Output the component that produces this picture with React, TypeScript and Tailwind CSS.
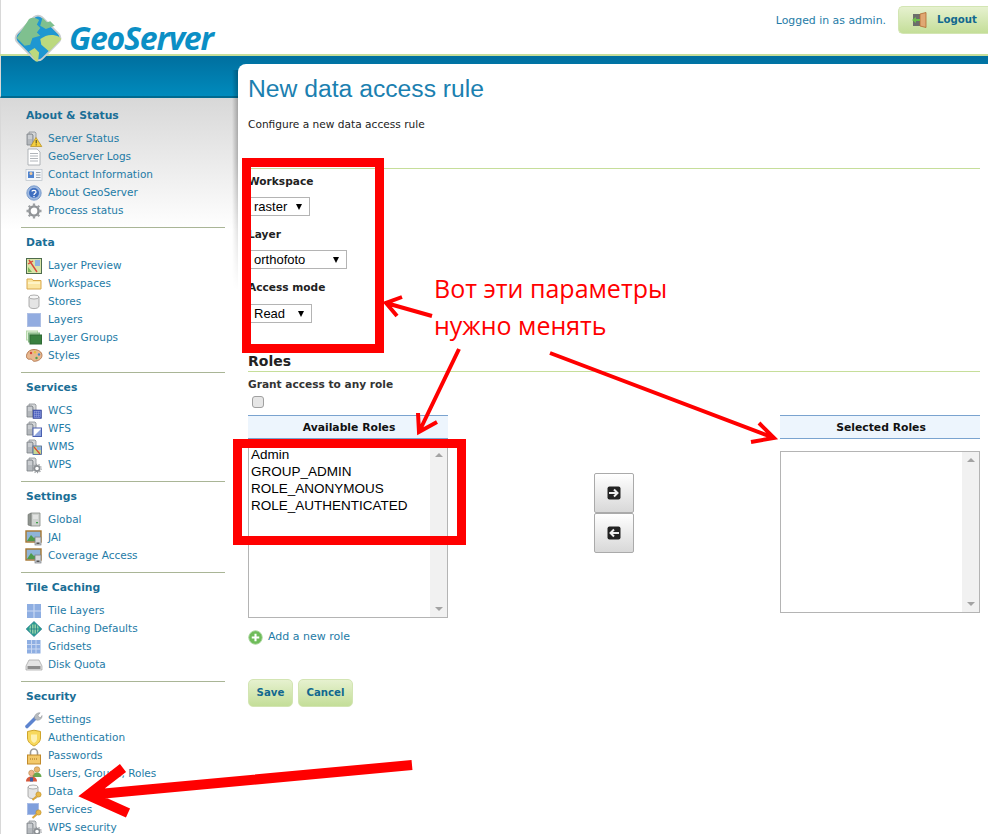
import type { ReactNode } from "react";

const Svg = ({ children }: { children: ReactNode }) => (
  <svg viewBox="0 0 16 16" className="h-4 w-4 shrink-0 overflow-visible">
    {children}
  </svg>
);

const Server = ({ x = 1 }: { x?: number }) => (
  <g>
    <path d={`M${x + 2} 1h6l1 1v10h-7z`} fill="#d4d6d8" stroke="#8b9096" strokeWidth=".8" />
    <path d={`M${x} 3h5l1 1v10h-6z`} fill="#b4b8bc" stroke="#7b8086" strokeWidth=".8" />
    <path d={`M${x + 1} 5h4M${x + 1} 7h4`} stroke="#eceef0" strokeWidth=".8" />
  </g>
);

const Key = () => (
  <g>
    <circle cx="12.5" cy="10.5" r="2.6" fill="#e8b84a" stroke="#b98a20" strokeWidth=".6" />
    <path d="M10.5 12.5 6.5 16" stroke="#d9a63a" strokeWidth="2" />
  </g>
);

const Can = () => (
  <g>
    <path d="M2 3v9c0 1.6 2.4 2.6 5 2.6s5-1 5-2.6V3z" fill="#e4e4e4" stroke="#9a9a9a" strokeWidth=".8" />
    <ellipse cx="7" cy="3" rx="5" ry="2" fill="#f6f6f6" stroke="#9a9a9a" strokeWidth=".8" />
  </g>
);

const Landscape = () => (
  <g>
    <rect x="0" y="1" width="15" height="11" fill="#8fb4d8" stroke="#a5752f" strokeWidth="1.4" />
    <path d="M1 11 5 5l3 3 2-1 3 4z" fill="#4f9a4a" />
    <rect x="9" y="7" width="6" height="8" fill="#c9cbce" stroke="#7d8186" strokeWidth=".7" />
    <path d="M10 9h4M10 11h4" stroke="#f0f0f0" strokeWidth=".7" />
    <rect x="10.5" y="12.5" width="3" height="1.5" fill="#555" />
  </g>
);

const icons: Record<string, ReactNode> = {
  status: (
    <Svg>
      <Server />
      <path d="M10 6.5 15.8 15.5H4.6z" fill="#f5cf3d" stroke="#b48a17" strokeWidth=".7" />
      <path d="M10.2 9v3.4M10.2 13.4v1" stroke="#3a3a20" strokeWidth="1" />
    </Svg>
  ),
  logs: (
    <Svg>
      <path d="M2 0h9l3 3v13H2z" fill="#fff" stroke="#9ea3a8" strokeWidth=".8" />
      <path d="M4 4.5h8M4 7h8M4 9.5h8M4 12h8" stroke="#a8adb2" strokeWidth=".9" />
    </Svg>
  ),
  contact: (
    <Svg>
      <rect x="0" y="2.5" width="16" height="11" fill="#f4f6f9" stroke="#b9c0c8" strokeWidth=".7" />
      <rect x="2" y="4.5" width="6" height="6.5" fill="#4e83cf" />
      <circle cx="5" cy="6.5" r="1.5" fill="#f0c89a" />
      <path d="M10 5.5h4.5M10 8h4.5M10 10.5h4.5" stroke="#8c97a4" strokeWidth=".9" />
    </Svg>
  ),
  about: (
    <Svg>
      <circle cx="8" cy="8" r="7.2" fill="#9db8e0" stroke="#6a8fc4" strokeWidth=".8" />
      <circle cx="8" cy="8" r="5" fill="#3f6fc0" />
      <path d="M6 6.5C6 5 10 5 10 7c0 1.4-2 1.3-2 3M8 11v1.2" fill="none" stroke="#fff" strokeWidth="1.2" />
    </Svg>
  ),
  gear: (
    <Svg>
      <path d="M8 5.2a2.8 2.8 0 1 0 0 5.6 2.8 2.8 0 0 0 0-5.6z" fill="#fff" />
      <circle cx="8" cy="8" r="4.6" fill="none" stroke="#8c8f92" strokeWidth="2.4" />
      <path d="M8 .5v3M8 12.5v3M.5 8h3M12.5 8h3M2.7 2.7l2.1 2.1M11.2 11.2l2.1 2.1M13.3 2.7l-2.1 2.1M4.8 11.2l-2.1 2.1" stroke="#9c9fa2" strokeWidth="2.3" />
    </Svg>
  ),
  preview: (
    <Svg>
      <rect x=".5" y=".5" width="15" height="15" fill="#d8e4a8" stroke="#4d6b4d" />
      <path d="M9 2h5v6H9z" fill="#8fb4e0" />
      <path d="M2 9l4 5h-4z" fill="#7cb65c" />
      <path d="M3 2l8 12M2 6l5-3" stroke="#d9483a" strokeWidth="1.4" />
    </Svg>
  ),
  folder: (
    <Svg>
      <path d="M1 3h5l1 1.5h8V13H1z" fill="#fbe6a2" stroke="#d9a84c" />
      <path d="M2 7h12" stroke="#fff6d0" strokeWidth="1.6" />
    </Svg>
  ),
  store: (
    <Svg>
      <g transform="translate(1 0)"><Can /></g>
    </Svg>
  ),
  layer: (
    <Svg>
      <rect x="1.5" y="1.5" width="13" height="13" fill="#92ace0" stroke="#aebfe4" />
    </Svg>
  ),
  groups: (
    <Svg>
      <rect x=".5" y="1" width="11" height="9" fill="#e0f0d8" stroke="#b5d8aa" />
      <rect x="2.5" y="3" width="11" height="9" fill="#9cc79a" stroke="#88b888" />
      <rect x="4" y="5" width="11.5" height="9" fill="#39803f" stroke="#2f6b35" />
    </Svg>
  ),
  styles: (
    <Svg>
      <path d="M8 1.500c4.600 0 8 2.600 8 5.800 0 3.600-3.800 6-7.800 6-1.600 0-1.600-1.600-2.800-2-1.600-.5-2.400.6-3.800-.6C-.8 9.400.4 1.500 8 1.500z" fill="#e8b890" stroke="#a8673a" strokeWidth=".8" />
      <circle cx="5" cy="5" r="1.200" fill="#d8433a" />
      <circle cx="9" cy="4.300" r="1.200" fill="#e8c23a" />
      <circle cx="13" cy="6.500" r="1.200" fill="#3f8ac8" />
      <circle cx="10.500" cy="10" r="1.200" fill="#4fa04a" />
    </Svg>
  ),
  wcs: (
    <Svg>
      <Server />
      <rect x="7" y="7" width="8.500" height="8.500" fill="#4f62c0" stroke="#39478f" strokeWidth=".6" />
      <path d="M8 9h7M8 11h7M8 13h7M9 8v7M11 8v7M13 8v7" stroke="#b5bfe8" strokeWidth=".7" strokeDasharray="1 1" />
    </Svg>
  ),
  wfs: (
    <Svg>
      <Server />
      <rect x="7" y="7" width="8.500" height="8.500" fill="#fff" stroke="#4a5fb0" />
      <path d="M15 8v7H8z" fill="#8ea4de" />
    </Svg>
  ),
  wms: (
    <Svg>
      <Server />
      <rect x="7" y="7" width="8.500" height="8.500" fill="#c9d890" stroke="#3f5fa0" strokeWidth=".8" />
      <path d="M8 8l6 7" stroke="#d9483a" strokeWidth="1.200" />
      <path d="M11 8h4v3h-4z" fill="#8fb4e0" />
    </Svg>
  ),
  wps: (
    <Svg>
      <Server />
      <circle cx="11" cy="11.500" r="2.600" fill="#fff" stroke="#8a8e92" strokeWidth="1.600" />
      <circle cx="11" cy="11.500" r="4.200" fill="none" stroke="#9a9ea2" strokeWidth="1.200" strokeDasharray="1.300 1.300" />
    </Svg>
  ),
  global: (
    <Svg>
      <path d="M5 1h9v13H5z" fill="#cfd2cf" stroke="#868a86" strokeWidth=".8" />
      <path d="M2 2.500 5 1v13l-3-1z" fill="#8f948f" stroke="#70746f" strokeWidth=".6" />
      <path d="M7 4h5M7 6h5" stroke="#f4f4f4" />
      <rect x="10" y="10" width="2" height="1.300" fill="#3fa04a" />
    </Svg>
  ),
  coverage: (
    <Svg>
      <Landscape />
    </Svg>
  ),
  tiles: (
    <Svg>
      <rect x="1" y="1" width="14" height="14" fill="#8eaee2" />
      <path d="M8 1v14M1 8h14" stroke="#c9d8f2" strokeWidth="1.200" />
    </Svg>
  ),
  caching: (
    <Svg>
      <path d="M8 .5 15.800 8 8 15.500.2 8z" fill="#27a08f" stroke="#1d6f8a" strokeWidth=".7" />
      <circle cx="8" cy="8" r="4.800" fill="#8fd0a8" />
      <path d="M3 8h10M8 3v10M5.500 4v8M10.500 4v8" stroke="#1d7f86" strokeWidth=".8" />
    </Svg>
  ),
  gridsets: (
    <Svg>
      <rect x="1" y="1" width="13.500" height="13.500" fill="#8eaee2" />
      <path d="M5.500 1v13.500M10 1v13.500M1 5.500h13.500M1 10h13.500" stroke="#c9d8f2" />
    </Svg>
  ),
  disk: (
    <Svg>
      <path d="M3 3h10l3 6v4H0V9z" fill="#e4e4e4" stroke="#a2a2a2" strokeWidth=".7" />
      <rect x="1.500" y="9" width="13" height="3" fill="#8c8c8c" />
    </Svg>
  ),
  wrench: (
    <Svg>
      <path d="M1 14.500 9.500 6" stroke="#5d84cf" strokeWidth="3.600" strokeLinecap="round" />
      <path d="M8.500 6.500C8 3 11 .5 14.200.8L12 3.200l.8 2 2.200.3L16 3.500c.5 3-2.800 5.500-5.500 4.500z" fill="#b8bcc0" stroke="#8a8e92" strokeWidth=".5" />
    </Svg>
  ),
  shield: (
    <Svg>
      <path d="M1.500 1.500 8 .2l6.500 1.300V8c0 4-3.500 6.500-6.500 8-3-1.500-6.500-4-6.500-8z" fill="#f7d85c" stroke="#cfa52c" />
      <path d="M5 4.500h6V9c0 2-1.500 3-3 4-1.500-1-3-2-3-4z" fill="#fdf0b0" />
    </Svg>
  ),
  lock: (
    <Svg>
      <path d="M4.500 7V4.500a3.500 3.500 0 0 1 7 0V7" fill="none" stroke="#9a9a9a" strokeWidth="1.600" />
      <rect x="1.500" y="7" width="13" height="9" fill="#f3c96a" stroke="#c08a2c" />
      <path d="M4 11h8" stroke="#a07020" strokeDasharray="1 1" />
    </Svg>
  ),
  users: (
    <Svg>
      <circle cx="11" cy="3.500" r="2.800" fill="#e9b56c" stroke="#a87c30" strokeWidth=".5" />
      <path d="M6.500 11c0-3 2-4.500 4.500-4.500s4.500 1.500 4.500 4.500z" fill="#6aa84f" />
      <circle cx="5.500" cy="7" r="2.800" fill="#eeb58a" stroke="#a87c30" strokeWidth=".5" />
      <path d="M0 15.500c0-3.500 2.500-5 5.500-5s5.500 1.500 5.500 5z" fill="#d4573c" />
      <path d="M4 11.500h3v4H4z" fill="#3a5fa8" />
    </Svg>
  ),
  secData: (
    <Svg>
      <Can />
      <Key />
    </Svg>
  ),
  secServices: (
    <Svg>
      <rect x="1.500" y="1.500" width="11" height="11" fill="#7f9fdc" stroke="#a8bce6" />
      <Key />
    </Svg>
  ),
  wpsSec: (
    <Svg>
      <Server />
      <circle cx="11" cy="11.500" r="2.600" fill="#fff" stroke="#8a8e92" strokeWidth="1.600" />
      <circle cx="11" cy="11.500" r="4.200" fill="none" stroke="#9a9ea2" strokeWidth="1.200" strokeDasharray="1.300 1.300" />
    </Svg>
  ),
};

const nav = [
  {
    title: "About & Status",
    items: [
      ["status", "Server Status"],
      ["logs", "GeoServer Logs"],
      ["contact", "Contact Information"],
      ["about", "About GeoServer"],
      ["gear", "Process status"],
    ],
  },
  {
    title: "Data",
    items: [
      ["preview", "Layer Preview"],
      ["folder", "Workspaces"],
      ["store", "Stores"],
      ["layer", "Layers"],
      ["groups", "Layer Groups"],
      ["styles", "Styles"],
    ],
  },
  {
    title: "Services",
    items: [
      ["wcs", "WCS"],
      ["wfs", "WFS"],
      ["wms", "WMS"],
      ["wps", "WPS"],
    ],
  },
  {
    title: "Settings",
    items: [
      ["global", "Global"],
      ["coverage", "JAI"],
      ["coverage", "Coverage Access"],
    ],
  },
  {
    title: "Tile Caching",
    items: [
      ["tiles", "Tile Layers"],
      ["caching", "Caching Defaults"],
      ["gridsets", "Gridsets"],
      ["disk", "Disk Quota"],
    ],
  },
  {
    title: "Security",
    items: [
      ["wrench", "Settings"],
      ["shield", "Authentication"],
      ["lock", "Passwords"],
      ["users", "Users, Groups, Roles"],
      ["secData", "Data"],
      ["secServices", "Services"],
      ["wpsSec", "WPS security"],
    ],
  },
];

const Logo = () => (
  <svg viewBox="0 0 50 50" className="h-[56px] w-[56px] shrink-0">
    <rect x="8.500" y="8.500" width="33" height="33" rx="6" transform="rotate(45 25 25)" fill="#c9ced0" />
    <rect x="10" y="10" width="30" height="30" rx="5" transform="rotate(45 25 25)" fill="#1f97d2" />
    <path d="M6 25 17 8c3-2 7-1 9 1l-2 4 3 3-3 4 3 3-7 2-2 6-5 1-4-4z" fill="#7fc08f" />
    <path d="M27 26c5-4 11-5 17-2l2 2-11 11-7-6z" fill="#bcd97e" />
    <path d="M29 7l4 4 3-1 4 4-8 3-5-3z" fill="#7fc08f" />
    <path d="M17 37l5-3 4 4-1 8-2 0z" fill="#bcd97e" />
  </svg>
);

const Field = ({ label, value, width, className, gap }: { label: string; value: string; width: string; className: string; gap: string }) => (
  <div className={`flex flex-col items-start ${className}`}>
    <label className="h-[16px] text-[10.6px] leading-[16px] font-bold text-[#222]">{label}</label>
    <div className={`flex h-[19px] items-center justify-between border border-[#b4b4b4] bg-white pr-[7px] pl-[5px] ${width} ${gap}`}>
      <span className="font-['Liberation_Sans'] text-[13px] text-black">{value}</span>
      <span className="h-0 w-0 border-x-[3.5px] border-t-[6px] border-x-transparent border-t-black" />
    </div>
  </div>
);

const ListBox = ({ roles, height }: { roles: string[]; height: string }) => (
  <div className={`flex w-[200px] border border-[#b4b4b4] bg-white ${height}`}>
    <div className="-mt-[1px] flex-1 pl-[2px] font-['Liberation_Sans'] text-[13.5px] leading-[17px] text-black">
      {roles.map((r) => (
        <div key={r}>{r}</div>
      ))}
    </div>
    <div className="flex w-[17px] flex-col items-center justify-between bg-[#f1f1f1] py-[6px]">
      <span className="h-0 w-0 border-x-[4px] border-b-[4px] border-x-transparent border-b-[#a3a3a3]" />
      <span className="h-0 w-0 border-x-[4px] border-t-[4px] border-x-transparent border-t-[#a3a3a3]" />
    </div>
  </div>
);

const RolesHead = ({ children }: { children: string }) => (
  <div className="h-[24px] w-[200px] border-y border-[#7aa3cf] bg-[#edf5fd] pl-[2px] text-center text-[10.8px] leading-[23px] font-bold text-[#111]">
    {children}
  </div>
);

const MoveBtn = ({ dir }: { dir: "r" | "l" }) => (
  <div className="flex h-[40px] w-[40px] items-center justify-center rounded-[2px] border border-[#aaa] bg-gradient-to-b from-white to-[#d8d8d8]">
    <svg viewBox="0 0 14 14" className="h-[14px] w-[14px]">
      <rect x="0.500" y="0.500" width="13" height="13" rx="2" fill="#222" />
      {dir === "r" ? (
        <path d="M2 7h8M7 3.500 10.500 7 7 10.500" fill="none" stroke="#eee" strokeWidth="2" />
      ) : (
        <path d="M12 7H4M7 3.500 3.500 7 7 10.500" fill="none" stroke="#eee" strokeWidth="2" />
      )}
    </svg>
  </div>
);

const GreenBtn = ({ children, className }: { children: ReactNode; className: string }) => (
  <div className={`flex items-center justify-center rounded-[5px] border border-[#d3e5b3] bg-gradient-to-b from-[#e6f1cf] to-[#c4de98] text-[10.2px] font-bold text-[#12688f] ${className}`}>
    {children}
  </div>
);

export default function App() {
  return (
    <div className="relative h-[834px] w-[988px] overflow-hidden bg-white font-['DejaVu_Sans',sans-serif]">
      <div className="flex h-[54px] items-start justify-between border-l-[1px] border-[#d8d8d8] pt-[6px] pl-[9px]">
        <div className="-mt-[1px] flex items-center gap-[3px] pt-[5px]">
          <Logo />
          <span className="font-['Open_Sans'] text-[32px] leading-none font-bold tracking-[-1.2px] text-[#0b8fc5] italic">GeoServer</span>
        </div>
        <div className="flex items-center gap-[12px]">
          <span className="pt-[3px] text-[10.9px] text-[#1e7ba6]">Logged in as admin.</span>
          <div className="flex h-[28px] w-[90px] items-center gap-[9px] rounded-l-[5px] border border-r-0 border-[#d3e5b3] bg-gradient-to-b from-[#e6f1cf] to-[#c4de98] pl-[13px] text-[10.2px] font-bold text-[#12688f]">
            <svg viewBox="0 0 16 16" className="h-4 w-4">
              <rect x="1" y="2" width="9" height="12" fill="#6b6f6b" />
              <path d="M8 2l6-1.500v15L8 14z" fill="#e0a873" stroke="#b06a30" strokeWidth=".8" />
              <path d="M0 8l4-3v2h4v2H4v2z" fill="#6cc04a" />
            </svg>
            Logout
          </div>
        </div>
      </div>
      <div className="h-[2px] bg-[#c6de9a]" />
      <div className="h-[42px] border-l border-[#d8d8d8] border-b-[2px] border-b-[#006a90] bg-gradient-to-b from-[#006f9f] to-[#008bbd]" />

      <div className="flex">
        <aside className="w-[238px] shrink-0 border-l border-[#d8d8d8] bg-gradient-to-b from-[#d8d8d8] to-white to-[132px] pr-[13px] pl-[20px]">
          {nav.map((s, i) => (
            <section key={s.title} className={i > 0 ? "border-t border-[#a9b596]" : ""}>
              <h3 className={`px-[5px] text-[10.8px] leading-[16px] font-bold text-[#1a6e96] ${i > 0 ? "pt-[7px]" : "pt-[10px]"}`}>{s.title}</h3>
              <ul className="pt-[6px] pb-[7px]">
                {s.items.map(([icon, label]) => (
                  <li key={label + icon} className="flex h-[18px] items-center gap-[6px] pl-[5px] text-[10.5px] text-[#1e7ba6]">
                    {icons[icon]}
                    <span>{label}</span>
                  </li>
                ))}
              </ul>
            </section>
          ))}
        </aside>

        <main className="relative -mt-[34px] h-[770px] flex-1 rounded-tl-[8px] bg-white pr-[8px] pl-[10px]">
          <div className="absolute top-[6px] -left-[6px] h-[220px] w-[6px] bg-gradient-to-r from-transparent to-black/25 [mask-image:linear-gradient(to_bottom,black_40%,transparent)]" />
          <h1 className="pt-[8px] font-['Liberation_Sans'] text-[24.7px] leading-[34px] text-[#1b80b0]">New data access rule</h1>
          <p className="mt-[10px] text-[10.6px] leading-[16px] text-[#222]">Configure a new data access rule</p>

          <div className="mt-[36px] border-t border-[#c6de9a] pt-[4px]">
            <div className="flex flex-col">
              <Field label="Workspace" value="raster" width="w-[62px]" className="" gap="mt-[8px]" />
              <Field label="Layer" value="orthofoto" width="w-[99px]" className="mt-[10px]" gap="mt-[8px]" />
              <Field label="Access mode" value="Read" width="w-[64px]" className="mt-[10px]" gap="mt-[9px]" />
            </div>
          </div>

          <h2 className="mt-[30px] h-[18px] text-[14px] leading-[16px] font-bold text-[#222]">Roles</h2>
          <div className="border-t border-[#c6de9a] pt-[4px]">
            <label className="block text-[10.6px] leading-[16px] font-bold text-[#333]">Grant access to any role</label>
            <div className="mt-[4px] ml-[4px] h-[12px] w-[12px] rounded-[3px] border border-[#a0a0a0] bg-[#e6e6e6]" />
          </div>

          <div className="mt-[7px] flex items-start justify-between">
            <div>
              <RolesHead>Available Roles</RolesHead>
              <div className="mt-[7px]">
                <ListBox roles={["Admin", "GROUP_ADMIN", "ROLE_ANONYMOUS", "ROLE_AUTHENTICATED"]} height="h-[172px]" />
              </div>
            </div>
            <div className="mt-[58px] flex flex-col">
              <MoveBtn dir="r" />
              <MoveBtn dir="l" />
            </div>
            <div>
              <RolesHead>Selected Roles</RolesHead>
              <div className="mt-[12px]">
                <ListBox roles={[]} height="h-[162px]" />
              </div>
            </div>
          </div>

          <div className="mt-[11px] flex items-center gap-[5px] text-[11px] text-[#1e7ba6]">
            <svg viewBox="0 0 16 16" className="h-[15px] w-[15px]">
              <circle cx="8" cy="8" r="7.200" fill="#6fbc5a" stroke="#a9d59c" />
              <path d="M8 4v8M4 8h8" stroke="#fff" strokeWidth="2.200" />
            </svg>
            Add a new role
          </div>

          <div className="mt-[33px] flex gap-[5px]">
            <GreenBtn className="h-[28px] w-[45px]">Save</GreenBtn>
            <GreenBtn className="h-[28px] w-[55px]">Cancel</GreenBtn>
          </div>
        </main>
      </div>

      {/* annotations drawn on top of the screenshot */}
      <svg viewBox="0 0 988 834" className="pointer-events-none absolute inset-0 h-[834px] w-[988px]" fill="none" stroke="#ff0000">
        <rect x="246.500" y="162.500" width="133" height="186" strokeWidth="9" />
        <rect x="237.500" y="443.500" width="224" height="97" strokeWidth="9" />
        <path d="M432 316 386 303M402 297 386 303 397 316" strokeWidth="4" />
        <path d="M459 349 419 432M418 413 419 432 437 422" strokeWidth="4" />
        <path d="M550 353 774 438M759 423 774 438 751 442" strokeWidth="4" />
        <path d="M412 765 88 795M123 768 88 795 128 813" strokeWidth="10" />
      </svg>
      <div className="absolute top-[270px] left-[434px] font-['Open_Sans'] text-[25px] leading-[37px] text-[#ff0000]">
        Вот эти параметры
        <br />
        нужно менять
      </div>
    </div>
  );
}
